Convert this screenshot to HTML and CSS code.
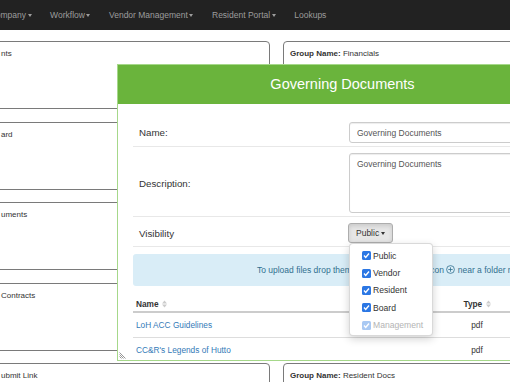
FILE: index.html
```html
<!DOCTYPE html>
<html lang="en">
<head>
    <meta charset="UTF-8">
    <meta name="viewport" content="width=device-width, initial-scale=1.0">
    <title>Document Groups</title>
    <link rel="stylesheet" href="styles.css">
</head>
<body>
    <nav class="topnav">
        <ul>
            <li>Company<span class="caret"></span></li>
            <li>Workflow<span class="caret"></span></li>
            <li>Vendor Management<span class="caret"></span></li>
            <li>Resident Portal<span class="caret"></span></li>
            <li>Lookups</li>
        </ul>
    </nav>

    <div class="page">
        <div class="col">
            <div class="group">nts</div>
            <div class="group">ard</div>
            <div class="group">uments</div>
            <div class="group">Contracts</div>
            <div class="group">ubmit Link</div>
        </div>
        <div class="col">
            <div class="group group-tall"><b>Group Name:</b> Financials</div>
            <div class="group"><b>Group Name:</b> Resident Docs</div>
        </div>
    </div>

    <div class="dialog">
        <div class="dialog-head">Governing Documents</div>
        <div class="dialog-body">
            <div class="form-row">
                <label>Name:</label>
                <input class="field" type="text" value="Governing Documents">
            </div>
            <div class="form-row">
                <label>Description:</label>
                <textarea class="field field-area">Governing Documents</textarea>
            </div>
            <div class="form-row">
                <label>Visibility</label>
                <div class="vis">
                    <button class="vis-btn">Public<span class="caret"></span></button>
                    <div class="vis-menu">
                        <div class="vis-item"><svg class="check" width="9" height="9" viewBox="0 0 9 9"><rect width="9" height="9" rx="1.5" fill="#2b77e4"/><path d="M2 4.6 L3.7 6.4 L7 2.5" stroke="#fff" stroke-width="1.4" fill="none"/></svg>Public</div>
                        <div class="vis-item"><svg class="check" width="9" height="9" viewBox="0 0 9 9"><rect width="9" height="9" rx="1.5" fill="#2b77e4"/><path d="M2 4.6 L3.7 6.4 L7 2.5" stroke="#fff" stroke-width="1.4" fill="none"/></svg>Vendor</div>
                        <div class="vis-item"><svg class="check" width="9" height="9" viewBox="0 0 9 9"><rect width="9" height="9" rx="1.5" fill="#2b77e4"/><path d="M2 4.6 L3.7 6.4 L7 2.5" stroke="#fff" stroke-width="1.4" fill="none"/></svg>Resident</div>
                        <div class="vis-item"><svg class="check" width="9" height="9" viewBox="0 0 9 9"><rect width="9" height="9" rx="1.5" fill="#2b77e4"/><path d="M2 4.6 L3.7 6.4 L7 2.5" stroke="#fff" stroke-width="1.4" fill="none"/></svg>Board</div>
                        <div class="vis-item disabled"><svg class="check" width="9" height="9" viewBox="0 0 9 9"><rect width="9" height="9" rx="1.5" fill="#a9c9f3"/><path d="M2 4.6 L3.7 6.4 L7 2.5" stroke="#fff" stroke-width="1.4" fill="none"/></svg>Management</div>
                    </div>
                </div>
            </div>

            <div class="upload-note">
                To upload files drop them here or click on the icon
                <svg class="plus" width="9" height="9" viewBox="0 0 9 9"><circle cx="4.5" cy="4.5" r="3.9" stroke="#31708f" stroke-width="0.8" fill="none"/><path d="M4.5 2.3 V6.7 M2.3 4.5 H6.7" stroke="#31708f" stroke-width="0.8"/></svg>
                near a folder name
            </div>

            <div class="files">
                <div class="t-head">
                    <div>Name <svg class="sort" width="5" height="8" viewBox="0 0 5 8"><path d="M0 3.4 L2.5 0.6 L5 3.4 Z M0 4.6 L2.5 7.4 L5 4.6 Z" fill="#ccc"/></svg></div>
                    <div class="t-type">Type <svg class="sort" width="5" height="8" viewBox="0 0 5 8"><path d="M0 3.4 L2.5 0.6 L5 3.4 Z M0 4.6 L2.5 7.4 L5 4.6 Z" fill="#ccc"/></svg></div>
                    <div></div>
                </div>
                <div class="t-row">
                    <div><a href="#">LoH ACC Guidelines</a></div>
                    <div class="t-type">pdf</div>
                    <div></div>
                </div>
                <div class="t-row">
                    <div><a href="#">CC&amp;R's Legends of Hutto</a></div>
                    <div class="t-type">pdf</div>
                    <div></div>
                </div>
            </div>
        </div>
        <svg class="grip" width="8" height="8" viewBox="0 0 8 8"><path d="M0.5 1.5 L6.5 7.5 M0.5 3.5 L4.5 7.5 M0.5 5.5 L2.5 7.5" stroke="#8a8a8a" stroke-width="0.9"/></svg>
    </div>
</body>
</html>
```

FILE: styles.css
```css
* {
    box-sizing: border-box;
}

html, body {
    margin: 0;
    height: 100%;
    overflow: hidden;
}

body {
    font-family: "Liberation Sans", Arial, sans-serif;
    font-size: 8.5px;
    color: #333;
    background-color: #fff;
}

/* top navigation */
.topnav {
    height: 30px;
    background-color: #222;
}

.topnav ul {
    list-style: none;
    margin: 0 0 0 -19.7px;
    padding: 0;
    height: 30px;
    display: flex;
    align-items: center;
    white-space: nowrap;
}

.topnav li {
    padding: 0 9.3px;
    color: #9d9d9d;
}

.caret {
    display: inline-block;
    margin-left: 1.5px;
    vertical-align: middle;
    border-top: 3px solid;
    border-left: 2px solid transparent;
    border-right: 2px solid transparent;
}

/* group panels behind the dialog */
.page {
    display: grid;
    grid-template-columns: 276px 260px;
    column-gap: 13px;
    margin-left: -6px;
    padding-top: 11px;
}

.col {
    display: flex;
    flex-direction: column;
    gap: 12.6px;
}

.group {
    height: 68px;
    border: 1px solid #7a7a7a;
    border-radius: 4px;
    padding: 6px 6px;
    font-size: 8px;
    line-height: 11px;
    white-space: nowrap;
}

.group-tall {
    height: 309px;
}

/* dialog */
.dialog {
    position: absolute;
    left: 117px;
    top: 64px;
    width: 553px;
    height: 297px;
    background-color: #fff;
    border: 1px solid #a6d88a;
    overflow: hidden;
}

.dialog-head {
    height: 39px;
    line-height: 39px;
    background-color: #6ab43c;
    color: #fff;
    font-size: 14.5px;
    text-align: center;
    padding-right: 102px;
}

.dialog-body {
    padding: 12px 16px 0 15px;
}

.form-row {
    display: grid;
    grid-template-columns: 210px 1fr;
    align-items: center;
    padding: 6px 0 3px 6px;
    border-bottom: 1px solid #e8e8e8;
}

.form-row label {
    font-size: 9.75px;
    color: #333;
}

.field {
    display: block;
    width: 100%;
    height: 21px;
    padding: 0 7px;
    font-family: "Liberation Sans", Arial, sans-serif;
    font-size: 8.5px;
    color: #555;
    border: 1px solid #ccc;
    border-radius: 3px;
    box-shadow: inset 0 1px 1px rgba(0, 0, 0, 0.075);
    outline: none;
}

.field-area {
    height: 60px;
    padding: 5px 7px;
    line-height: 10px;
    resize: none;
}

.vis {
    position: relative;
    display: inline-block;
    justify-self: start;
}

.vis-btn {
    display: block;
    height: 20px;
    margin-left: -1px;
    padding: 0 7px;
    font-family: "Liberation Sans", Arial, sans-serif;
    font-size: 8.5px;
    color: #333;
    background-color: #e6e6e6;
    border: 1px solid #adadad;
    border-radius: 3px;
    box-shadow: inset 0 2px 4px rgba(0, 0, 0, 0.125);
}

.vis-menu {
    position: absolute;
    top: 100%;
    left: 0;
    width: 84px;
    padding: 3px 0 1px;
    background-color: #fff;
    border: 1px solid rgba(0, 0, 0, 0.15);
    border-radius: 4px;
    box-shadow: 0 3px 8px rgba(0, 0, 0, 0.18);
    z-index: 2;
}

.vis-item {
    display: flex;
    align-items: center;
    height: 17.4px;
    padding-left: 12px;
    font-size: 8.6px;
    color: #333;
}

.vis-item .check {
    margin-right: 2px;
    flex: none;
}

.vis-item.disabled {
    color: #b4b4b4;
}

.upload-note {
    margin-top: 7px;
    padding: 10px;
    line-height: 12px;
    background-color: #d9edf7;
    color: #31708f;
    border-radius: 3px;
    text-align: center;
    white-space: nowrap;
}

.plus {
    vertical-align: -1px;
}

/* files table */
.files {
    margin-top: 10px;
    font-size: 8.3px;
}

.t-head,
.t-row {
    display: grid;
    grid-template-columns: 314px 60px 1fr;
}

.t-head > div,
.t-row > div {
    padding: 0 3px;
}

.t-head {
    font-weight: bold;
    padding: 3px 0 2px;
    line-height: 10px;
    border-bottom: 2px solid #ccc;
}

.t-row {
    padding: 6.5px 0;
    line-height: 11px;
    border-bottom: 1px solid #ddd;
}

.t-type {
    text-align: center;
}

.sort {
    margin-left: 1px;
    vertical-align: -1px;
}

.t-row a {
    color: #337ab7;
    text-decoration: none;
}

.grip {
    position: absolute;
    left: 1px;
    bottom: 1px;
}
```
